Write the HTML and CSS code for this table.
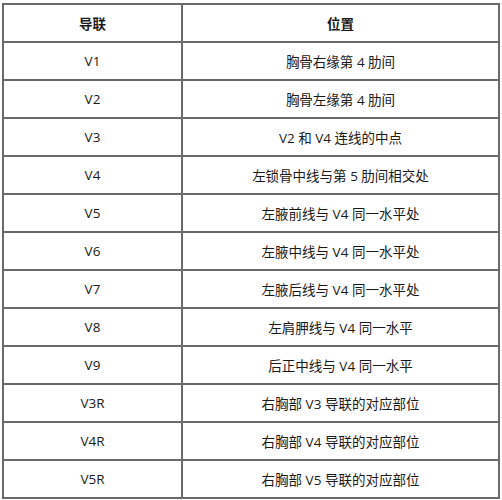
FILE: index.html
```html
<!DOCTYPE html>
<html lang="zh">
<head>
<meta charset="utf-8">
<link rel="stylesheet" href="styles.css">
</head>
<body>
<table class="leads">
  <thead>
    <tr><th class="c1">导联</th><th class="c2">位置</th></tr>
  </thead>
  <tbody>
    <tr><td>V1</td><td>胸骨右缘第 4 肋间</td></tr>
    <tr><td>V2</td><td>胸骨左缘第 4 肋间</td></tr>
    <tr><td>V3</td><td>V2 和 V4 连线的中点</td></tr>
    <tr><td>V4</td><td>左锁骨中线与第 5 肋间相交处</td></tr>
    <tr><td>V5</td><td>左腋前线与 V4 同一水平处</td></tr>
    <tr><td>V6</td><td>左腋中线与 V4 同一水平处</td></tr>
    <tr><td>V7</td><td>左腋后线与 V4 同一水平处</td></tr>
    <tr><td>V8</td><td>左肩胛线与 V4 同一水平</td></tr>
    <tr><td>V9</td><td>后正中线与 V4 同一水平</td></tr>
    <tr><td>V3R</td><td>右胸部 V3 导联的对应部位</td></tr>
    <tr><td>V4R</td><td>右胸部 V4 导联的对应部位</td></tr>
    <tr><td>V5R</td><td>右胸部 V5 导联的对应部位</td></tr>
  </tbody>
</table>
</body>
</html>
```
FILE: styles.css
```css
html, body {
  margin: 0;
  padding: 0;
  background: #fff;
}
body {
  padding: 3px 0 0 2px;
  font-family: "Open Sans", "Noto Sans CJK SC", sans-serif;
  font-size: 13.5px;
  color: #1a1a1a;
}
.leads {
  border-collapse: collapse;
  width: 498px;
  table-layout: fixed;
  border: 2px solid #555;
}
.leads th, .leads td {
  border: 2px solid #6a6a6a;
  height: 38px;
  padding: 0;
  text-align: center;
  vertical-align: middle;
  box-sizing: border-box;
}
.leads th {
  font-weight: bold;
  color: #1a1a1a;
}
.leads .c1 {
  width: 179px;
}
```
